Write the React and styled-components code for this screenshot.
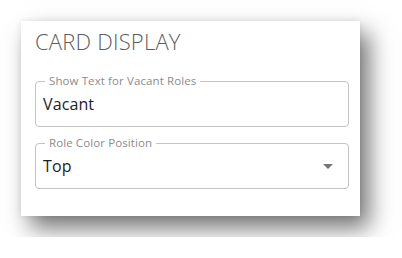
import React from "react";
import styled, { createGlobalStyle } from "styled-components";

const GlobalStyle = createGlobalStyle`
  html, body {
    margin: 0;
    padding: 0;
    background: #ffffff;
  }
  body {
    font-family: "Open Sans", "Liberation Sans", sans-serif;
  }
`;

const Page = styled.div`
  padding: 21px;
`;

const Card = styled.section`
  width: 339px;
  box-sizing: border-box;
  background: #ffffff;
  padding: 3px 11px 27px 14px;
  box-shadow: 9px 12px 22px rgba(0, 0, 0, 0.55), 0 0 6px rgba(0, 0, 0, 0.08);
  display: flex;
  flex-direction: column;
  gap: 16px;
`;

const Title = styled.h2`
  margin: 0 0 7px;
  font-size: 22px;
  line-height: 34px;
  font-weight: 300;
  color: #5c5c5c;
  letter-spacing: 0.2px;
`;

const Field = styled.div`
  position: relative;
  height: 46px;
  box-sizing: border-box;
  border: 1px solid #c4c4c4;
  border-radius: 4px;
  display: flex;
  align-items: center;
  padding: 0 15px 0 7px;
  cursor: ${(p) => (p.$select ? "pointer" : "text")};
`;

const Label = styled.span`
  position: absolute;
  top: -8px;
  left: 9px;
  padding: 0 4px;
  background: #ffffff;
  font-size: 11.5px;
  line-height: 14px;
  color: #8c8c8c;
  letter-spacing: 0.1px;
`;

const Value = styled.span`
  flex: 1;
  font-size: 16px;
  color: #1d1d24;
  letter-spacing: 0.1px;
`;

const Arrow = () => (
  <svg width="10" height="5" viewBox="0 0 10 5" aria-hidden="true">
    <path d="M0 0 L5 5 L10 0 Z" fill="#757575" />
  </svg>
);

const TextField = ({ label, value }) => (
  <Field>
    <Label>{label}</Label>
    <Value>{value}</Value>
  </Field>
);

const SelectField = ({ label, value }) => (
  <Field $select>
    <Label>{label}</Label>
    <Value>{value}</Value>
    <Arrow />
  </Field>
);

export default function App() {
  return (
    <Page>
      <GlobalStyle />
      <Card>
        <Title>CARD DISPLAY</Title>
        <TextField label="Show Text for Vacant Roles" value="Vacant" />
        <SelectField label="Role Color Position" value="Top" />
      </Card>
    </Page>
  );
}
